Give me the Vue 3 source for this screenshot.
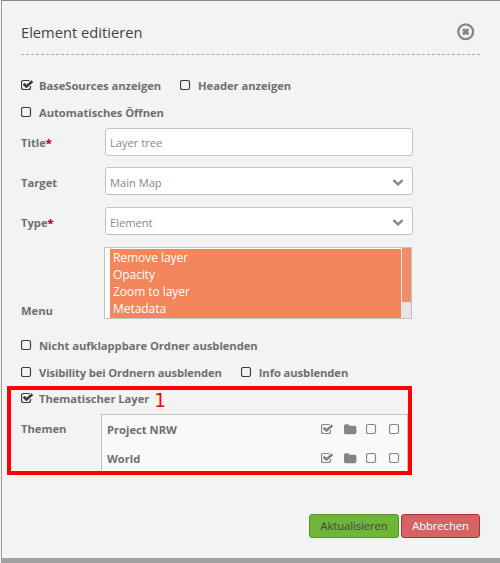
<script setup>
import { h } from 'vue'

const CheckBox = (props) =>
  h('svg', { class: 'check', viewBox: '0 0 13 12', width: 13, height: 12 }, [
    h('path', {
      d: props.on
        ? 'M9.5 7V8.5Q9.5 10.5 7.5 10.5H2.5Q.5 10.5 .5 8.5V3.5Q.5 1.5 2.5 1.5H8.5'
        : 'M2.3 1.5H7.7Q9.5 1.5 9.5 3.3V8.7Q9.5 10.5 7.7 10.5H2.3Q.5 10.5 .5 8.7V3.3Q.5 1.5 2.3 1.5Z',
      fill: 'none',
      stroke: 'currentColor',
      'stroke-width': 1.2,
    }),
    props.on
      ? h('path', { d: 'M2.6 4.8L5.4 7.5L11.4 2.2', fill: 'none', stroke: 'currentColor', 'stroke-width': 2.6 })
      : null,
  ])
CheckBox.props = { on: Boolean }

const fields = [
  { label: 'Title', required: true, value: 'Layer tree', select: false },
  { label: 'Target', required: false, value: 'Main Map', select: true },
  { label: 'Type', required: true, value: 'Element', select: true },
]
const options = ['Remove layer', 'Opacity', 'Zoom to layer', 'Metadata']
const themes = ['Project NRW', 'World']
</script>

<template>
  <div class="dialog">
    <header class="head">
      <h1>Element editieren</h1>
      <svg class="close" width="18" height="18" viewBox="0 0 18 18">
        <circle cx="8.7" cy="8.8" r="7.4" fill="none" stroke="#858585" stroke-width="2.3" />
        <path d="M6 6.1L11.4 11.5M11.4 6.1L6 11.5" stroke="#858585" stroke-width="2.9" />
      </svg>
    </header>

    <div class="checks first">
      <label><CheckBox on /><span>BaseSources anzeigen</span></label>
      <label><CheckBox /><span>Header anzeigen</span></label>
    </div>
    <div class="checks second">
      <label><CheckBox /><span>Automatisches Öffnen</span></label>
    </div>

    <div class="fields">
      <div v-for="f in fields" :key="f.label" class="field" :class="{ drop: f.select }">
        <div class="name">{{ f.label }}<b v-if="f.required">*</b></div>
        <div class="input">
          <span>{{ f.value }}</span>
          <svg v-if="f.select" width="12" height="8" viewBox="0 0 12 8">
            <path d="M1.4 1.2L6 5.3L10.6 1.2" fill="none" stroke="#858585" stroke-width="2.4" />
          </svg>
        </div>
      </div>
    </div>

    <div class="menu">
      <div class="name">Menu</div>
      <div class="list">
        <div class="options">
          <div v-for="o in options" :key="o">{{ o }}</div>
        </div>
        <div class="track"><div class="thumb"></div></div>
      </div>
    </div>

    <div class="checks third">
      <label><CheckBox /><span>Nicht aufklappbare Ordner ausblenden</span></label>
    </div>
    <div class="checks fourth">
      <label><CheckBox /><span>Visibility bei Ordnern ausblenden</span></label>
      <label><CheckBox /><span>Info ausblenden</span></label>
    </div>

    <section class="thematic">
      <div class="checks">
        <label><CheckBox on /><span>Thematischer Layer</span></label>
        <span class="mark">1</span>
      </div>
      <div class="themes">
        <div class="name">Themen</div>
        <div class="table">
          <div v-for="t in themes" :key="t" class="theme">
            <span class="theme-name">{{ t }}</span>
            <CheckBox on />
            <svg class="folder" width="13" height="11" viewBox="0 0 13 11">
              <path d="M0 1.8Q0 .2 1.6 .2H4Q5.5 .2 5.5 1.8H10.8Q12.4 1.8 12.4 3.4V8.6Q12.4 10.2 10.8 10.2H1.6Q0 10.2 0 8.6Z" fill="#858585" />
            </svg>
            <CheckBox />
            <CheckBox />
          </div>
        </div>
      </div>
    </section>

    <footer class="actions">
      <button class="ok">Aktualisieren</button>
      <button class="cancel">Abbrechen</button>
    </footer>
  </div>
</template>

<style>
body {
  background: #f3f3f3;
}
</style>

<style scoped>
.dialog {
  box-sizing: border-box;
  height: 563px;
  margin-left: 1px;
  padding: 0 20px 0 19px;
  border-top: 1px solid #888;
  border-left: 1px solid #999;
  border-bottom: 5px solid #a1a1a1;
  background: #f3f3f3;
  display: flex;
  flex-direction: column;
  font: 11.2px/16px "Open Sans", sans-serif;
  color: #6f6f6f;
}
.head {
  display: flex;
  justify-content: space-between;
  height: 53px;
  border-bottom: 1px dashed #aaa;
}
h1 {
  margin: 20px 0 0;
  font-size: 14.7px;
  line-height: 22px;
  font-weight: 400;
  color: #444;
}
.close {
  margin: 22px 5px 0 0;
}
.checks {
  display: flex;
  align-items: center;
  gap: 19px;
  height: 16px;
  font-weight: 700;
  letter-spacing: -0.03px;
}
.checks label {
  display: flex;
  align-items: center;
}
.check {
  flex: none;
  display: block;
}
.checks .check {
  color: #3c3c3c;
  margin: -2px 5px 0 0;
}
.first { margin-top: 23px; }
.second { margin-top: 11px; }
.third { margin-top: 19px; }
.fourth {
  margin-top: 11px;
  letter-spacing: -0.12px;
}
.fourth label + label {
  letter-spacing: -0.06px;
}
.fields {
  display: flex;
  flex-direction: column;
  gap: 12px;
  margin-top: 7px;
}
.field {
  display: flex;
  align-items: center;
  height: 28px;
}
.field:first-child {
  margin-bottom: -1px;
}
.name {
  flex: none;
  width: 84px;
  font-weight: 700;
}
.name b {
  color: #b5121b;
}
.field .name {
  padding-top: 2px;
}
.drop .name {
  padding-top: 4px;
}
.input {
  box-sizing: border-box;
  display: flex;
  align-items: center;
  justify-content: space-between;
  width: 308px;
  height: 28px;
  padding: 2px 9px 0 4px;
  border: 1px solid #c3c3c3;
  border-radius: 3px;
  background: #fff;
  color: #888;
}
.field .input {
  letter-spacing: -0.04px;
}
.drop .input {
  padding: 4px 8px 0 4px;
}
.menu {
  display: flex;
  align-items: flex-end;
  height: 72px;
  margin-top: 12px;
}
.menu .name {
  width: 83px;
}
.list {
  box-sizing: border-box;
  display: flex;
  width: 308px;
  height: 72px;
  padding-left: 5px;
  border: 1px solid #c3c3c3;
  background: #fff;
}
.options {
  flex: 1;
  margin-top: 1px;
  padding-left: 3px;
  background: #f3865a;
  color: #fff;
  font-size: 12px;
  line-height: 17px;
  letter-spacing: -0.05px;
}
.track {
  width: 10px;
  background: #e5e5e5;
}
.thumb {
  height: 54px;
  margin-left: 1px;
  background: #ef8f68;
}
.thematic {
  position: relative;
  margin-top: 10px;
}
.thematic::after {
  content: "";
  position: absolute;
  left: -14px;
  top: -5px;
  width: 397px;
  height: 81px;
  border: 4px solid #f00;
}
.thematic .checks {
  gap: 5px;
}
.mark {
  padding-top: 4px;
  font: 400 18.6px/16px "DejaVu Sans", sans-serif;
  color: #f00;
}
.themes {
  display: flex;
  margin-top: 7px;
}
.themes .name {
  width: 80px;
  padding-top: 7px;
}
.table {
  box-sizing: border-box;
  width: 307px;
  height: 58px;
  border: 1px solid #c3c3c3;
  border-bottom: 0;
  background: #f9f9f9;
}
.theme {
  display: flex;
  align-items: center;
  height: 29px;
  padding-left: 5px;
}
.theme-name {
  width: 214px;
  font-weight: 700;
}
.theme .check {
  margin-top: -1px;
  color: #858585;
}
.folder {
  margin: 0 9px 0 10px;
}
.theme .check + .check {
  margin-left: 10px;
}
.actions {
  display: flex;
  justify-content: flex-end;
  gap: 2px;
  margin-top: 42px;
}
button {
  box-sizing: border-box;
  height: 24px;
  padding: 0;
  border-radius: 3px;
  font: inherit;
}
.ok {
  width: 90px;
  border: 1px solid #4f9720;
  background: #6fb536;
  color: #444;
  letter-spacing: -0.06px;
}
.cancel {
  width: 79px;
  border: 1px solid #b03434;
  background: #d46464;
  color: #fff;
  letter-spacing: -0.06px;
}
</style>
